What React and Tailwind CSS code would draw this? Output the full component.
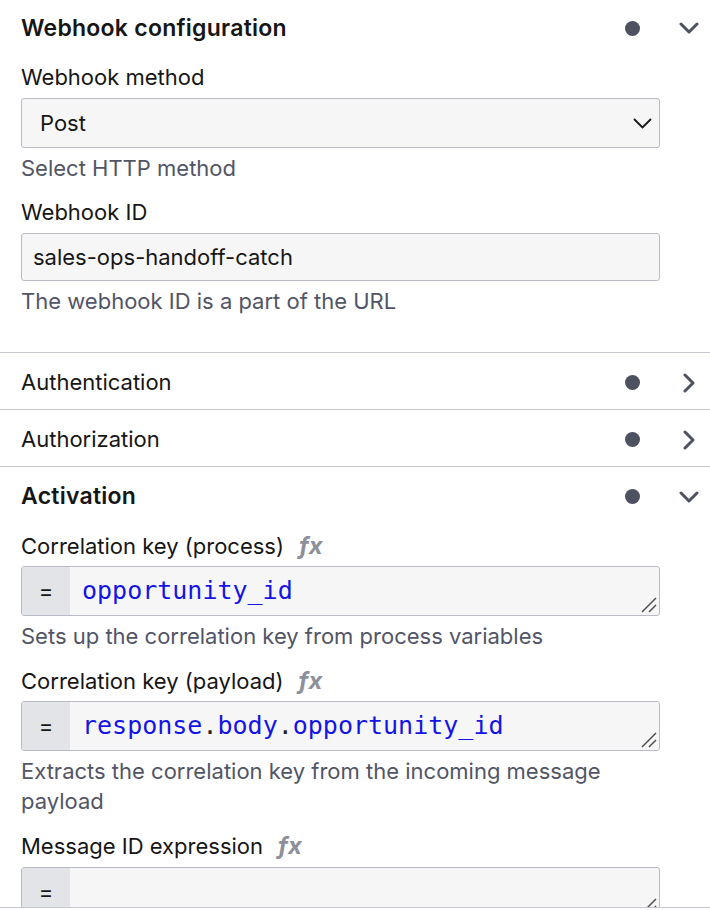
import React from "react";

const font = "font-['Inter','Liberation_Sans',sans-serif]";

function Dot() {
  return <span className="block w-[15px] h-[15px] rounded-full bg-[#4d5160]" />;
}

function ChevronDown() {
  return (
    <svg width="20" height="12" viewBox="0 0 20 12" className="block">
      <path d="M2 2 L10 10 L18 2" fill="none" stroke="#4d5160" strokeWidth="3" strokeLinecap="round" strokeLinejoin="round" />
    </svg>
  );
}

function ChevronRight() {
  return (
    <svg width="14" height="20" viewBox="0 0 14 20" className="block">
      <path d="M3 2 L11 10 L3 18" fill="none" stroke="#4d5160" strokeWidth="3" strokeLinecap="round" strokeLinejoin="round" />
    </svg>
  );
}

function Header({ title, bold, open, first }) {
  return (
    <div
      className={
        "flex items-center pl-[21px] pr-[6px] " +
        (first ? "h-[56px]" : "border-t border-[#c6c8cf] pt-[3px] h-[57px]")
      }
    >
      <span
        className={
          "flex-1 text-[#161616] " +
          (bold ? "font-semibold text-[23px] tracking-[0.25px]" : "text-[22px]")
        }
      >
        {title}
      </span>
      <div className="w-[30px] flex justify-center">
        <Dot />
      </div>
      <div className="w-[30px] flex justify-center ml-[27px]">{open ? <ChevronDown /> : <ChevronRight />}</div>
    </div>
  );
}

function Fx() {
  return <span className="ml-[15px] font-bold italic text-[#8d909b] text-[24px] leading-[30px]">fx</span>;
}

function Label({ children, fx }) {
  return (
    <div className="flex items-center text-[22px] leading-[30px] text-[#161616]">
      {children}
      {fx && <Fx />}
    </div>
  );
}

function Desc({ children }) {
  return <div className="text-[22px] leading-[30px] text-[#525566] pr-[40px]">{children}</div>;
}

function Resizer() {
  return (
    <svg width="16" height="16" viewBox="0 0 16 16" className="absolute right-[2px] bottom-[2px]">
      <path d="M1 15 L15 1" stroke="#4a4a4a" strokeWidth="1.4" />
      <path d="M8 15 L15 8" stroke="#4a4a4a" strokeWidth="1.4" />
    </svg>
  );
}

function FeelField({ children }) {
  return (
    <div className="relative flex h-[50px] w-[639px] rounded-[3px] border border-[#b9bcc6] bg-[#f6f6f6] overflow-hidden">
      <div className="w-[48px] flex items-center justify-center bg-[#e3e4e8] text-[#161616] text-[22px]">=</div>
      <div className="flex items-center pl-[12px] font-['DejaVu_Sans_Mono',monospace] text-[25px] text-[#1414e6]">
        {children}
      </div>
      <Resizer />
    </div>
  );
}

export default function App() {
  return (
    <div className={"w-[710px] h-[910px] bg-white " + font}>
      <div className="h-[908px] overflow-hidden border-b border-[#c6c8cf]">
        <Header title="Webhook configuration" bold open first />
        <div className="pl-[21px] pt-[6px] pb-[36px]">
          <Label>Webhook method</Label>
          <div className="mt-[6px] flex items-center h-[50px] w-[639px] rounded-[3px] border border-[#b9bcc6] bg-[#f6f6f6] pl-[18px] pr-[7px]">
            <span className="flex-1 text-[22px] text-[#161616] pt-[1px]">Post</span>
            <svg width="19" height="11" viewBox="0 0 19 11" className="block">
              <path d="M1 1 L9.5 9.5 L18 1" fill="none" stroke="#161616" strokeWidth="1.8" />
            </svg>
          </div>
          <div className="mt-[5px]">
            <Desc>Select HTTP method</Desc>
          </div>
          <div className="mt-[14px]">
            <Label>Webhook ID</Label>
          </div>
          <div className="mt-[6px] flex items-center h-[48px] w-[639px] rounded-[3px] border border-[#b9bcc6] bg-[#f6f6f6] pl-[11px]">
            <span className="text-[22px] text-[#161616] pt-[1px]">sales-ops-handoff-catch</span>
          </div>
          <div className="mt-[5px]">
            <Desc>The webhook ID is a part of the URL</Desc>
          </div>
        </div>
        <Header title="Authentication" />
        <Header title="Authorization" />
        <Header title="Activation" bold open />
        <div className="pl-[21px] pt-[8px]">
          <Label fx>Correlation key (process)</Label>
          <div className="mt-[5px]">
            <FeelField>opportunity_id</FeelField>
          </div>
          <div className="mt-[5px]">
            <Desc>Sets up the correlation key from process variables</Desc>
          </div>
          <div className="mt-[15px]">
            <Label fx>Correlation key (payload)</Label>
          </div>
          <div className="mt-[5px]">
            <FeelField>
              response<span className="text-[#222]">.</span>body<span className="text-[#222]">.</span>opportunity_id
            </FeelField>
          </div>
          <div className="mt-[5px]">
            <Desc>Extracts the correlation key from the incoming message payload</Desc>
          </div>
          <div className="mt-[15px]">
            <Label fx>Message ID expression</Label>
          </div>
          <div className="mt-[6px]">
            <FeelField></FeelField>
          </div>
        </div>
      </div>
    </div>
  );
}
